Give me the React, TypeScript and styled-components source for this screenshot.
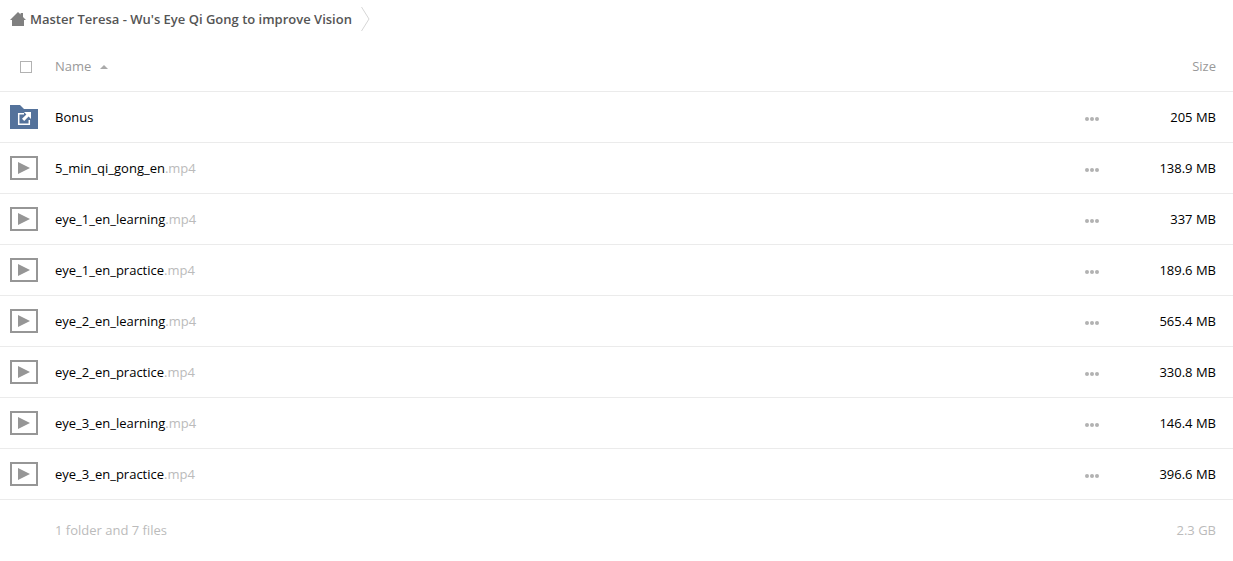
import React from "react";
import styled, { createGlobalStyle } from "styled-components";

const GlobalStyle = createGlobalStyle`
  body {
    margin: 0;
    background: #fff;
    color: #000;
    font: 13px/18px "Open Sans", "Noto Sans", sans-serif;
  }
`;

const Breadcrumbs = styled.nav`
  display: flex;
  align-items: center;
  height: 41px;
  padding: 0 10px;
  box-sizing: border-box;
`;

const Crumb = styled.a`
  display: flex;
  align-items: center;
  gap: 4px;
  height: 38px;
  margin-bottom: 3px;
  color: #555;
  font-weight: 600;
  text-decoration: none;
`;

const Separator = styled.svg`
  margin: 0 0 3px 8px;
`;

const FileTable = styled.table`
  width: 100%;
  table-layout: fixed;
  border-collapse: separate;
  border-spacing: 0;
`;

const IconColumn = styled.col`
  width: 55px;
`;

const ActionColumn = styled.col`
  width: 38px;
`;

const SizeColumn = styled.col`
  width: 120px;
`;

const Cell = styled.td<{ $end?: boolean }>`
  box-sizing: border-box;
  height: 51px;
  padding: 0 ${(p) => (p.$end ? "17px" : "0")} 0 0;
  border-bottom: 1px solid #ebebeb;
  text-align: ${(p) => (p.$end ? "right" : "left")};
  vertical-align: middle;
  white-space: nowrap;
`;

const HeadCell = styled(Cell)`
  color: #999;
  font-weight: 400;
`;

const FootCell = styled(Cell)`
  height: 60px;
  border-bottom: 0;
  color: #bbb;
`;

const Checkbox = styled.input`
  display: block;
  appearance: none;
  box-sizing: border-box;
  width: 12px;
  height: 12px;
  margin: 2px 0 0 20px;
  border: 1px solid #b2b2b2;
  background: #fff;
`;

const SortButton = styled.button`
  display: flex;
  align-items: center;
  gap: 9px;
  padding: 0;
  border: 0;
  background: none;
  color: inherit;
  font: inherit;
`;

const SortArrow = styled.svg`
  margin-top: 2px;
`;

const FileIcon = styled.svg`
  display: block;
  margin-left: 10px;
`;

const FileLink = styled.a`
  color: #000;
  text-decoration: none;
`;

const Extension = styled.span`
  color: #bbb;
`;

const MoreButton = styled.button`
  display: block;
  padding: 8px 10px 4px;
  border: 0;
  background: none;
`;

const Dots = styled.svg`
  display: block;
`;

type Entry = { name: string; ext?: string; size: string };

const entries: Entry[] = [
  { name: "Bonus", size: "205 MB" },
  { name: "5_min_qi_gong_en", ext: ".mp4", size: "138.9 MB" },
  { name: "eye_1_en_learning", ext: ".mp4", size: "337 MB" },
  { name: "eye_1_en_practice", ext: ".mp4", size: "189.6 MB" },
  { name: "eye_2_en_learning", ext: ".mp4", size: "565.4 MB" },
  { name: "eye_2_en_practice", ext: ".mp4", size: "330.8 MB" },
  { name: "eye_3_en_learning", ext: ".mp4", size: "146.4 MB" },
  { name: "eye_3_en_practice", ext: ".mp4", size: "396.6 MB" },
];

const HomeIcon = () => (
  <svg width="16" height="14" viewBox="0 0 16 14" fill="#808080" aria-hidden="true">
    <path d="M8 0 10.600 2.600V1H13v4L16 8H14v6H2V8H0Z" />
  </svg>
);

const FolderIcon = () => (
  <FileIcon width="28" height="24" viewBox="0 0 28 24" aria-hidden="true">
    <path d="M0 0H10L14 4H28V24H0Z" fill="#54729b" />
    <path d="M14 8.700H8.700V19.300H19.300V15" fill="none" stroke="#fff" strokeWidth="1.500" />
    <path d="M14 7H21V14L18.600 11.600 14.200 16 12 13.800 16.400 9.400Z" fill="#fff" />
  </FileIcon>
);

const VideoIcon = () => (
  <FileIcon width="28" height="24" viewBox="0 0 28 24" aria-hidden="true">
    <path d="M1 1H27V23H1Z" fill="#fff" stroke="#969696" strokeWidth="2" />
    <path d="M8 6 20 12 8 18Z" fill="#969696" />
  </FileIcon>
);

export default function App() {
  return (
    <>
      <GlobalStyle />
      <Breadcrumbs aria-label="Breadcrumb">
        <Crumb href="#">
          <HomeIcon />
          Master Teresa - Wu's Eye Qi Gong to improve Vision
        </Crumb>
        <Separator width="10" height="24" viewBox="0 0 10 24" aria-hidden="true">
          <path d="M1.500 0 9 12 1.500 24" fill="none" stroke="#d6d6d6" />
        </Separator>
      </Breadcrumbs>
      <FileTable>
        <colgroup>
          <IconColumn />
          <col />
          <ActionColumn />
          <SizeColumn />
        </colgroup>
        <thead>
          <tr>
            <HeadCell>
              <Checkbox type="checkbox" aria-label="Select all" />
            </HeadCell>
            <HeadCell as="th" scope="col">
              <SortButton type="button">
                Name
                <SortArrow width="8" height="4" viewBox="0 0 8 4" aria-hidden="true">
                  <path d="M4 0 8 4H0Z" fill="#aaa" />
                </SortArrow>
              </SortButton>
            </HeadCell>
            <HeadCell />
            <HeadCell as="th" scope="col" $end>
              Size
            </HeadCell>
          </tr>
        </thead>
        <tbody>
          {entries.map(({ name, ext, size }) => (
            <tr key={name}>
              <Cell>{ext ? <VideoIcon /> : <FolderIcon />}</Cell>
              <Cell>
                <FileLink href="#">
                  {name}
                  {ext && <Extension>{ext}</Extension>}
                </FileLink>
              </Cell>
              <Cell>
                <MoreButton type="button" aria-label={`Actions for ${name}`}>
                  <Dots width="14" height="4" viewBox="0 0 14 4" fill="#b2b2b2">
                    <circle cx="2" cy="2" r="2" />
                    <circle cx="7" cy="2" r="2" />
                    <circle cx="12" cy="2" r="2" />
                  </Dots>
                </MoreButton>
              </Cell>
              <Cell $end>{size}</Cell>
            </tr>
          ))}
        </tbody>
        <tfoot>
          <tr>
            <FootCell />
            <FootCell colSpan={2}>1 folder and 7 files</FootCell>
            <FootCell $end>2.3 GB</FootCell>
          </tr>
        </tfoot>
      </FileTable>
    </>
  );
}
